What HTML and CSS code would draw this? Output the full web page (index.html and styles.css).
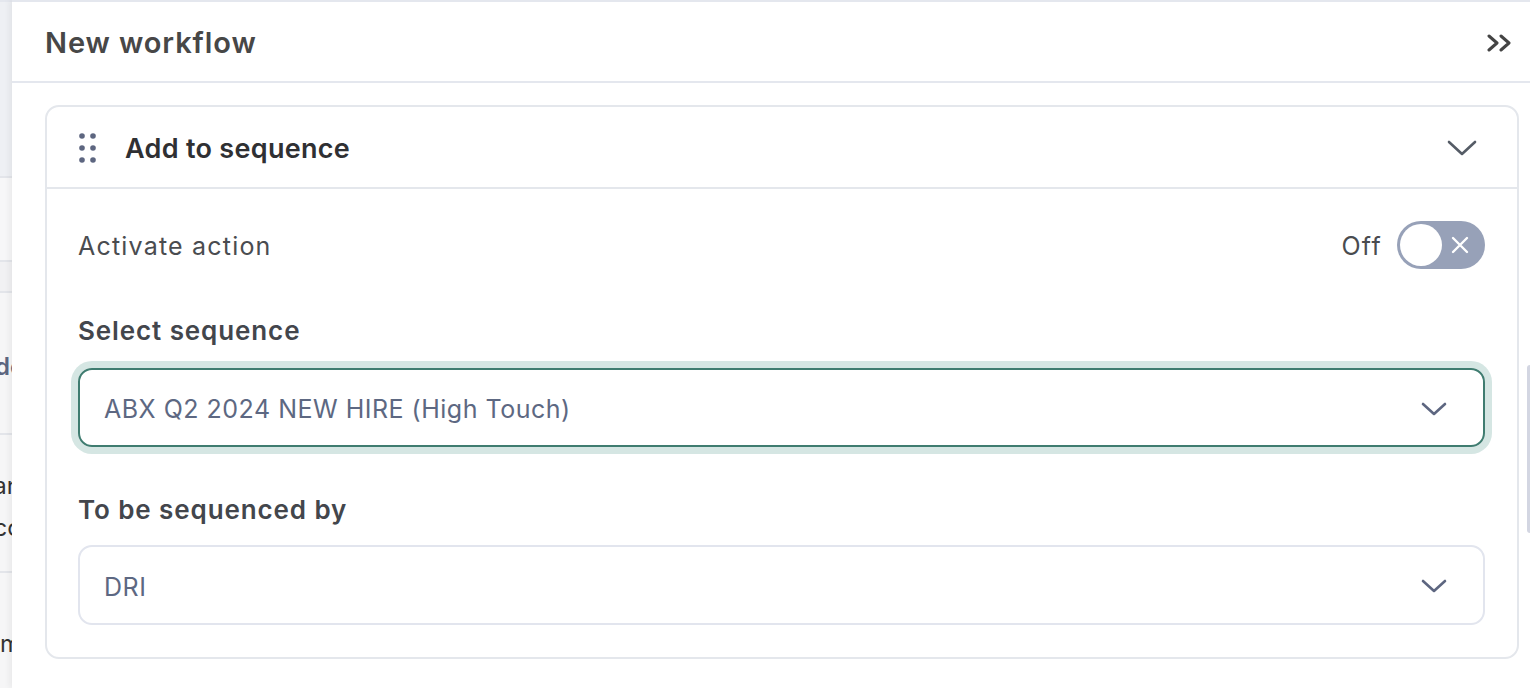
FILE: index.html
```html
<!DOCTYPE html>
<html>
<head>
<meta charset="utf-8">
<link rel="stylesheet" href="styles.css">
</head>
<body>
<div class="page">
  <div class="behind">
    <div class="b-top"></div>
    <div class="b-row b-row1"></div>
    <div class="b-row b-band"></div>
    <div class="b-row b-text1"><span class="frag frag-blue">Buildc</span></div>
    <div class="b-row b-text2"><span class="frag">Dan</span><span class="frag">Acc</span></div>
    <div class="b-row b-text3"><span class="frag">Tom</span></div>
  </div>
  <div class="panel">
    <div class="panel-header">
      <h1 class="title">New workflow</h1>
      <svg class="collapse" width="26" height="18" viewBox="0 0 26 18"><path d="M2 2 L10 9 L2 16 M14 2 L22 9 L14 16" fill="none" stroke="#444" stroke-width="3" stroke-linecap="round" stroke-linejoin="round"/></svg>
    </div>
    <div class="panel-body">
      <div class="card">
        <div class="card-header">
          <svg class="grip" width="18" height="30" viewBox="0 0 18 30"><g fill="#5d6680"><circle cx="3" cy="3" r="2.8"/><circle cx="14" cy="3" r="2.8"/><circle cx="3" cy="15" r="2.8"/><circle cx="14" cy="15" r="2.8"/><circle cx="3" cy="27" r="2.8"/><circle cx="14" cy="27" r="2.8"/></g></svg>
          <span class="card-title">Add to sequence</span>
          <svg class="card-chev" width="30" height="18" viewBox="0 0 30 18"><path d="M2 3 L15 15 L28 3" fill="none" stroke="#555c66" stroke-width="2.6" stroke-linecap="round" stroke-linejoin="round"/></svg>
        </div>
        <div class="card-body">
          <div class="toggle-row">
            <span class="row-label">Activate action</span>
            <div class="toggle-wrap">
              <span class="toggle-state">Off</span>
              <div class="toggle">
                <div class="knob"></div>
                <svg class="toggle-x" width="18" height="18" viewBox="0 0 18 18"><path d="M2 2 L16 16 M16 2 L2 16" stroke="#fff" stroke-width="2.4" stroke-linecap="round"/></svg>
              </div>
            </div>
          </div>
          <div class="field">
            <label class="field-label">Select sequence</label>
            <div class="select focused">
              <span class="select-value">ABX Q2 2024 NEW HIRE (High Touch)</span>
              <svg class="select-chev" width="26" height="16" viewBox="0 0 26 16"><path d="M2 3 L13 13 L24 3" fill="none" stroke="#5d6680" stroke-width="2.6" stroke-linecap="round" stroke-linejoin="round"/></svg>
            </div>
          </div>
          <div class="field">
            <label class="field-label">To be sequenced by</label>
            <div class="select">
              <span class="select-value">DRI</span>
              <svg class="select-chev" width="26" height="16" viewBox="0 0 26 16"><path d="M2 3 L13 13 L24 3" fill="none" stroke="#5d6680" stroke-width="2.6" stroke-linecap="round" stroke-linejoin="round"/></svg>
            </div>
          </div>
        </div>
      </div>
    </div>
    <div class="scroll-thumb"></div>
  </div>
</div>
</body>
</html>
```

FILE: styles.css
```css
* { box-sizing: border-box; }
html, body { margin: 0; padding: 0; }
body {
  font-family: Inter, "Noto Sans", sans-serif;
  background: #f5f6f8;
  width: 1530px;
  height: 688px;
  overflow: hidden;
}
.page {
  display: flex;
  height: 688px;
}
.behind {
  width: 12px;
  flex: none;
  background: #f6f6f7;
  overflow: hidden;
  display: flex;
  flex-direction: column;
  border-top: 2px solid #e4e7ee;
}
.b-top {
  height: 176px;
  background: #eef0f4;
  border-bottom: 2px solid #e3e5ea;
}
.b-row { display: flex; flex-direction: column; align-items: flex-end; }
.b-row1 { height: 84px; border-bottom: 2px solid #e3e5ea; background: #f7f7f8; }
.b-band { height: 31px; background: #f1f1f3; border-bottom: 2px solid #e3e5ea; }
.b-text1 { height: 142px; border-bottom: 2px solid #e3e5ea; justify-content: center; padding-top: 8px; }
.b-text2 { height: 138px; border-bottom: 2px solid #e3e5ea; justify-content: center; padding-top: 8px; }
.b-text3 { flex: 1; padding-top: 50px; }
.frag {
  font-size: 24px;
  line-height: 42px;
  color: #333;
  white-space: nowrap;
  margin-right: -9px;
}
.frag-blue { color: #5d6680; font-weight: 600; margin-right: -12px; }
.panel {
  flex: 1;
  background: #fff;
  border-top: 2px solid #e4e7ee;
  box-shadow: -3px 0 6px rgba(0, 0, 0, 0.05);
  position: relative;
  display: flex;
  flex-direction: column;
}
.panel-header {
  height: 81px;
  border-bottom: 2px solid #e4e7ee;
  display: flex;
  align-items: center;
  justify-content: space-between;
  padding: 0 17px 0 33px;
}
.title {
  margin: 0;
  margin-top: 2px;
  font-size: 29px;
  font-weight: 600;
  color: #474747;
  letter-spacing: 0.9px;
}
.collapse { margin-top: 2px; }
.panel-body {
  padding: 22px 11px 0 33px;
}
.card {
  border: 2px solid #e4e7ec;
  border-radius: 14px;
}
.card-header {
  height: 82px;
  border-bottom: 2px solid #e4e7ec;
  display: flex;
  align-items: center;
  padding: 0 40px 0 32px;
}
.grip { flex: none; margin-right: 28px; margin-top: 2px; }
.card-title {
  flex: 1;
  font-size: 27px;
  font-weight: 600;
  color: #2f3033;
  letter-spacing: 0.3px;
  margin-top: 2px;
}
.card-chev { margin-top: 2px; }
.card-body {
  padding: 32px 32px 32px 31px;
  display: flex;
  flex-direction: column;
}
.toggle-row {
  height: 48px;
  display: flex;
  align-items: center;
  justify-content: space-between;
}
.row-label {
  font-size: 25px;
  color: #4a4c50;
  letter-spacing: 1.2px;
  margin-top: 2px;
}
.toggle-wrap {
  display: flex;
  align-items: center;
  gap: 15px;
}
.toggle-state {
  font-size: 25px;
  color: #4a4c50;
  letter-spacing: 1.3px;
  margin-top: 2px;
}
.toggle {
  width: 88px;
  height: 48px;
  border-radius: 24px;
  background: #97a1b8;
  display: flex;
  align-items: center;
  padding: 0 16px 0 3px;
  justify-content: space-between;
}
.knob {
  width: 42px;
  height: 42px;
  border-radius: 50%;
  background: #fff;
}
.field {
  display: flex;
  flex-direction: column;
}
.field:nth-child(2) { margin-top: 47px; }
.field:nth-child(3) { margin-top: 48px; }
.field-label {
  font-size: 26px;
  font-weight: 600;
  color: #43464c;
  line-height: 30px;
  margin-bottom: 22px;
  letter-spacing: 0.9px;
}
.field:nth-child(3) .field-label { margin-bottom: 20px; }
.select {
  height: 79px;
  border: 2px solid #e2e5ee;
  border-radius: 14px;
  display: flex;
  align-items: center;
  justify-content: space-between;
  padding: 0 36px 0 24px;
}
.select.focused {
  border-color: #3f7c70;
  box-shadow: 0 0 0 7px #d5e6e3;
}
.field:nth-child(3) .select { height: 80px; }
.select-value {
  font-size: 25px;
  color: #5d6882;
  letter-spacing: 0.5px;
  margin-top: 3px;
}
.select-chev { margin-top: 2px; }
.scroll-thumb {
  position: absolute;
  right: 0;
  top: 363px;
  width: 3px;
  height: 168px;
  background: #d3d6e2;
  border-radius: 3px 0 0 3px;
}
```
